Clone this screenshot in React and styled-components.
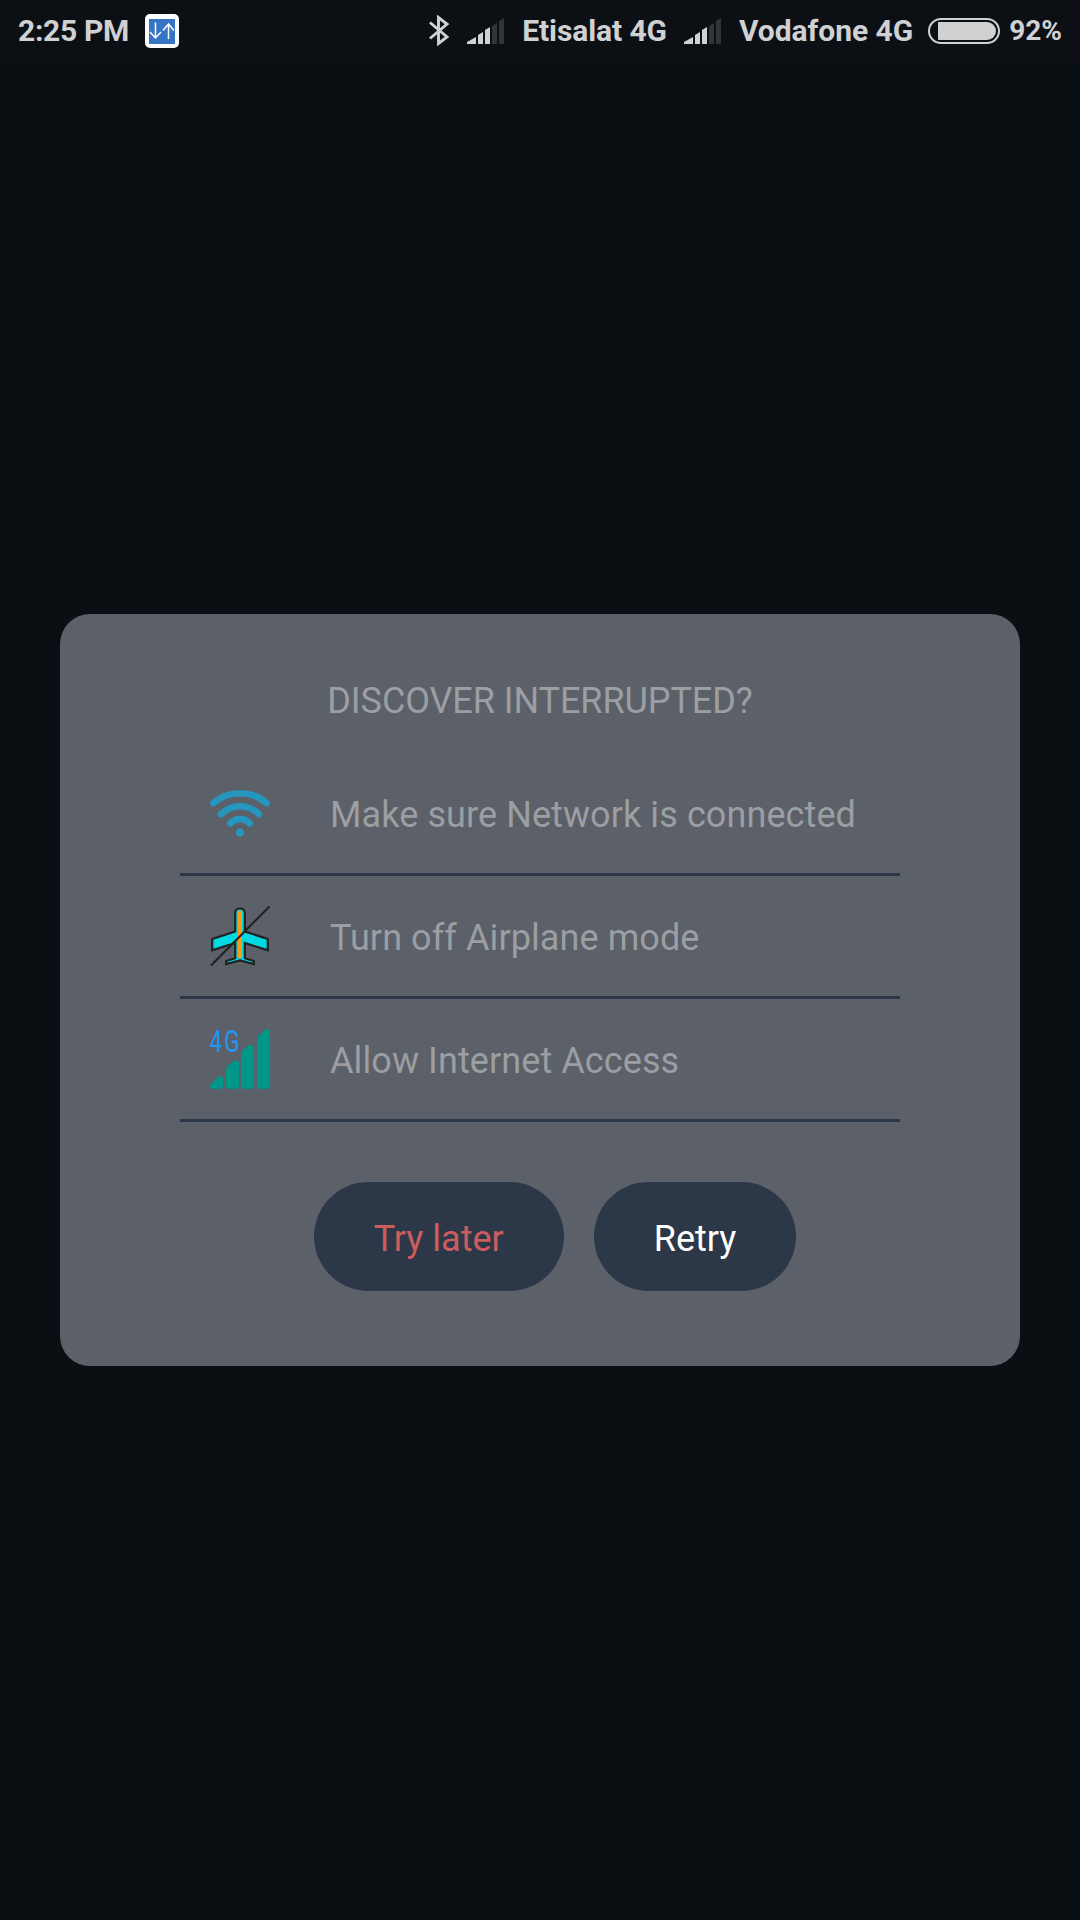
import React from 'react';
import styled, { createGlobalStyle } from 'styled-components';

const GlobalStyle = createGlobalStyle`
  html, body { margin: 0; background: #0a0f13; }
  *, *::before, *::after { box-sizing: border-box; }
  body { font-family: Roboto, "Noto Sans", sans-serif; }
`;

const Screen = styled.div`
  width: 1080px;
  height: 1920px;
  display: flex;
  flex-direction: column;
  background: #0a0f13;
  overflow: hidden;
`;

const StatusBar = styled.header`
  height: 63px;
  flex: none;
  display: flex;
  align-items: center;
  padding: 0 18px 2px 18px;
  background: #0c1015;
  color: #d0d1d2;
`;

const StatusText = styled.span`
  font-size: ${(p) => p.$size || 30}px;
  line-height: 36px;
  font-weight: 700;
  letter-spacing: ${(p) => p.$spacing || 0}px;
  margin-left: ${(p) => p.$left || 0}px;
  white-space: nowrap;
`;

const StatusIcon = styled.svg`
  display: block;
  flex: none;
  margin-left: ${(p) => p.$left || 0}px;
`;

const Spacer = styled.div`
  flex: 1;
`;

const Main = styled.main`
  flex: 1;
  display: flex;
  justify-content: center;
  align-items: flex-start;
  padding-top: 551px;
`;

const Dialog = styled.section`
  width: 960px;
  height: 752px;
  border-radius: 30px;
  background: #5c6068;
  display: flex;
  flex-direction: column;
  align-items: center;
  padding-top: 66px;
`;

const Title = styled.h1`
  margin: 0 0 31px;
  font-size: 36px;
  line-height: 42px;
  font-weight: 400;
  color: #9b9ea2;
  letter-spacing: -0.08px;
`;

const TipList = styled.ul`
  width: 720px;
  margin: 0;
  padding: 0;
  list-style: none;
`;

const Tip = styled.li`
  height: 123px;
  display: flex;
  align-items: center;
  gap: 60px;
  padding: 0 30px;
  border-bottom: 3px solid #2c3748;
`;

const TipIcon = styled.svg`
  display: block;
  flex: none;
  width: 60px;
  height: 60px;
  overflow: visible;
`;

const TipText = styled.span`
  font-size: 36px;
  line-height: 42px;
  letter-spacing: 0.09px;
  color: #9b9ea2;
  white-space: nowrap;
  padding-top: 3px;
`;

const Actions = styled.div`
  display: flex;
  margin-top: 60px;
`;

const ActionButton = styled.button`
  height: 109px;
  margin-left: 30px;
  padding: 4px 60px 0;
  border: 0;
  border-radius: 55px;
  background: #2c3748;
  color: ${(p) => p.$color};
  font: 400 36px/42px Roboto, "Noto Sans", sans-serif;
`;

const Signal = ({ left }) => (
  <StatusIcon $left={left} width="38" height="26" viewBox="0 0 38 26">
    <g fill="#d0d1d2">
      <path d="M0 26V24L9 19V26Z" />
      <path d="M11 26V17L16 14V26Z" />
      <path d="M18 26V12L23 9V26Z" />
    </g>
    <g fill="#313438">
      <path d="M25 26V8L30 5V26Z" />
      <path d="M32 26V3L37 0V26Z" />
    </g>
  </StatusIcon>
);

const SyncApp = () => (
  <StatusIcon $left={16} width="34" height="34" viewBox="0 0 34 34">
    <rect width="34" height="34" rx="5" fill="#fff" />
    <rect x="4" y="5" width="26" height="25" fill="#3674c4" />
    <path
      d="M10.500 8.500V23.500M5 18L10.500 24L16 18M23.500 25V10.500M18 16.500L23.500 10L29 16.500"
      fill="none"
      stroke="#fff"
      strokeWidth="1.500"
    />
  </StatusIcon>
);

const Bluetooth = () => (
  <StatusIcon width="21" height="31" viewBox="0 0 21 31">
    <path
      d="M1 7.500L18 22L9.500 28.500V2.500L18 9L1 23.500"
      fill="none"
      stroke="#d0d1d2"
      strokeWidth="2.900"
    />
  </StatusIcon>
);

const Battery = () => (
  <StatusIcon $left={15} width="72" height="26" viewBox="0 0 72 26">
    <rect x="1" y="1" width="70" height="24" rx="12" fill="none" stroke="#d0d1d2" strokeWidth="2" />
    <path d="M11 4H59A9 9 0 0 1 59 22H11Q10 22 10 21V5Q10 4 11 4Z" fill="#d0d1d2" />
  </StatusIcon>
);

const Wifi = () => (
  <TipIcon viewBox="0 0 60 60">
    <g fill="none" stroke="#2596be" strokeWidth="6.600" strokeLinecap="round">
      <path d="M3.300 20.200C18.500 6.900 41.500 6.900 56.700 20.200" />
      <path d="M11 31.200C21.500 20.600 38.500 20.600 49 31.200" />
      <path d="M20.300 40.500C25 34.700 35 34.700 39.700 40.500" />
    </g>
    <circle cx="30" cy="49.500" r="3.900" fill="#2596be" />
  </TipIcon>
);

const Airplane = () => (
  <TipIcon viewBox="0 0 60 60">
    <path
      d="M25.200 25.500L2.200 33V44.300L25.200 37V52.200L16.200 55V58L30 54.500L43.800 58V55L34.800 52.200V37L57.800 44.300V33L34.800 25.500V7Q34.800 2.500 30 2.500Q25.200 2.500 25.200 7Z"
      fill="#00d9e1"
      stroke="#212121"
      strokeWidth="2.200"
    />
    <path d="M28 52V6.500Q28 4.500 30 4.500Q32 4.500 32 6.500V52Z" fill="#ff9811" />
    <path d="M1 59.500L59.500 0.500" stroke="#212121" strokeWidth="2.100" />
  </TipIcon>
);

const MobileData = () => (
  <TipIcon viewBox="0 0 60 60">
    <text
      transform="translate(-0.500 23) scale(0.700 1)"
      fontFamily="Roboto, sans-serif"
      fontSize="32"
      fontWeight="400"
      letterSpacing="3.200"
      fill="#2196f3"
    >
      4G
    </text>
    <g fill="#009688">
      <path d="M0 57Q0 56 2 54L8 48Q9 47 10 47Q13 47 13 50V57Q13 60 10 60H3Q0 60 0 57Z" />
      <path d="M16 42Q16 39 18 37L22 33Q24 31.500 26 31.500Q29 31.500 29 35V57Q29 60 26 60H19Q16 60 16 57Z" />
      <path d="M31 27Q31 23 33 21L37 17.500Q39 16 41 16Q44 16 44 19V57Q44 60 41 60H34Q31 60 31 57Z" />
      <path d="M47 11Q47 8 49 6L54 1.500Q56 0 57 0Q60 0 60 3V57Q60 60 57 60H50Q47 60 47 57Z" />
    </g>
  </TipIcon>
);

const tips = [
  { text: 'Make sure Network is connected', Icon: Wifi },
  { text: 'Turn off Airplane mode', Icon: Airplane },
  { text: 'Allow Internet Access', Icon: MobileData },
];

export default function App() {
  return (
    <Screen>
      <GlobalStyle />
      <StatusBar>
        <StatusText $spacing={-0.3}>2:25 PM</StatusText>
        <SyncApp />
        <Spacer />
        <Bluetooth />
        <Signal left={17} />
        <StatusText $left={17} $spacing={-0.1}>Etisalat 4G</StatusText>
        <Signal left={17} />
        <StatusText $left={17} $spacing={-0.03}>Vodafone 4G</StatusText>
        <Battery />
        <StatusText $left={9} $size={28}>92%</StatusText>
      </StatusBar>
      <Main>
        <Dialog>
          <Title>DISCOVER INTERRUPTED?</Title>
          <TipList>
            {tips.map(({ text, Icon }) => (
              <Tip key={text}>
                <Icon />
                <TipText>{text}</TipText>
              </Tip>
            ))}
          </TipList>
          <Actions>
            <ActionButton $color="#cd5c5c">Try later</ActionButton>
            <ActionButton $color="#ffffff">Retry</ActionButton>
          </Actions>
        </Dialog>
      </Main>
    </Screen>
  );
}
